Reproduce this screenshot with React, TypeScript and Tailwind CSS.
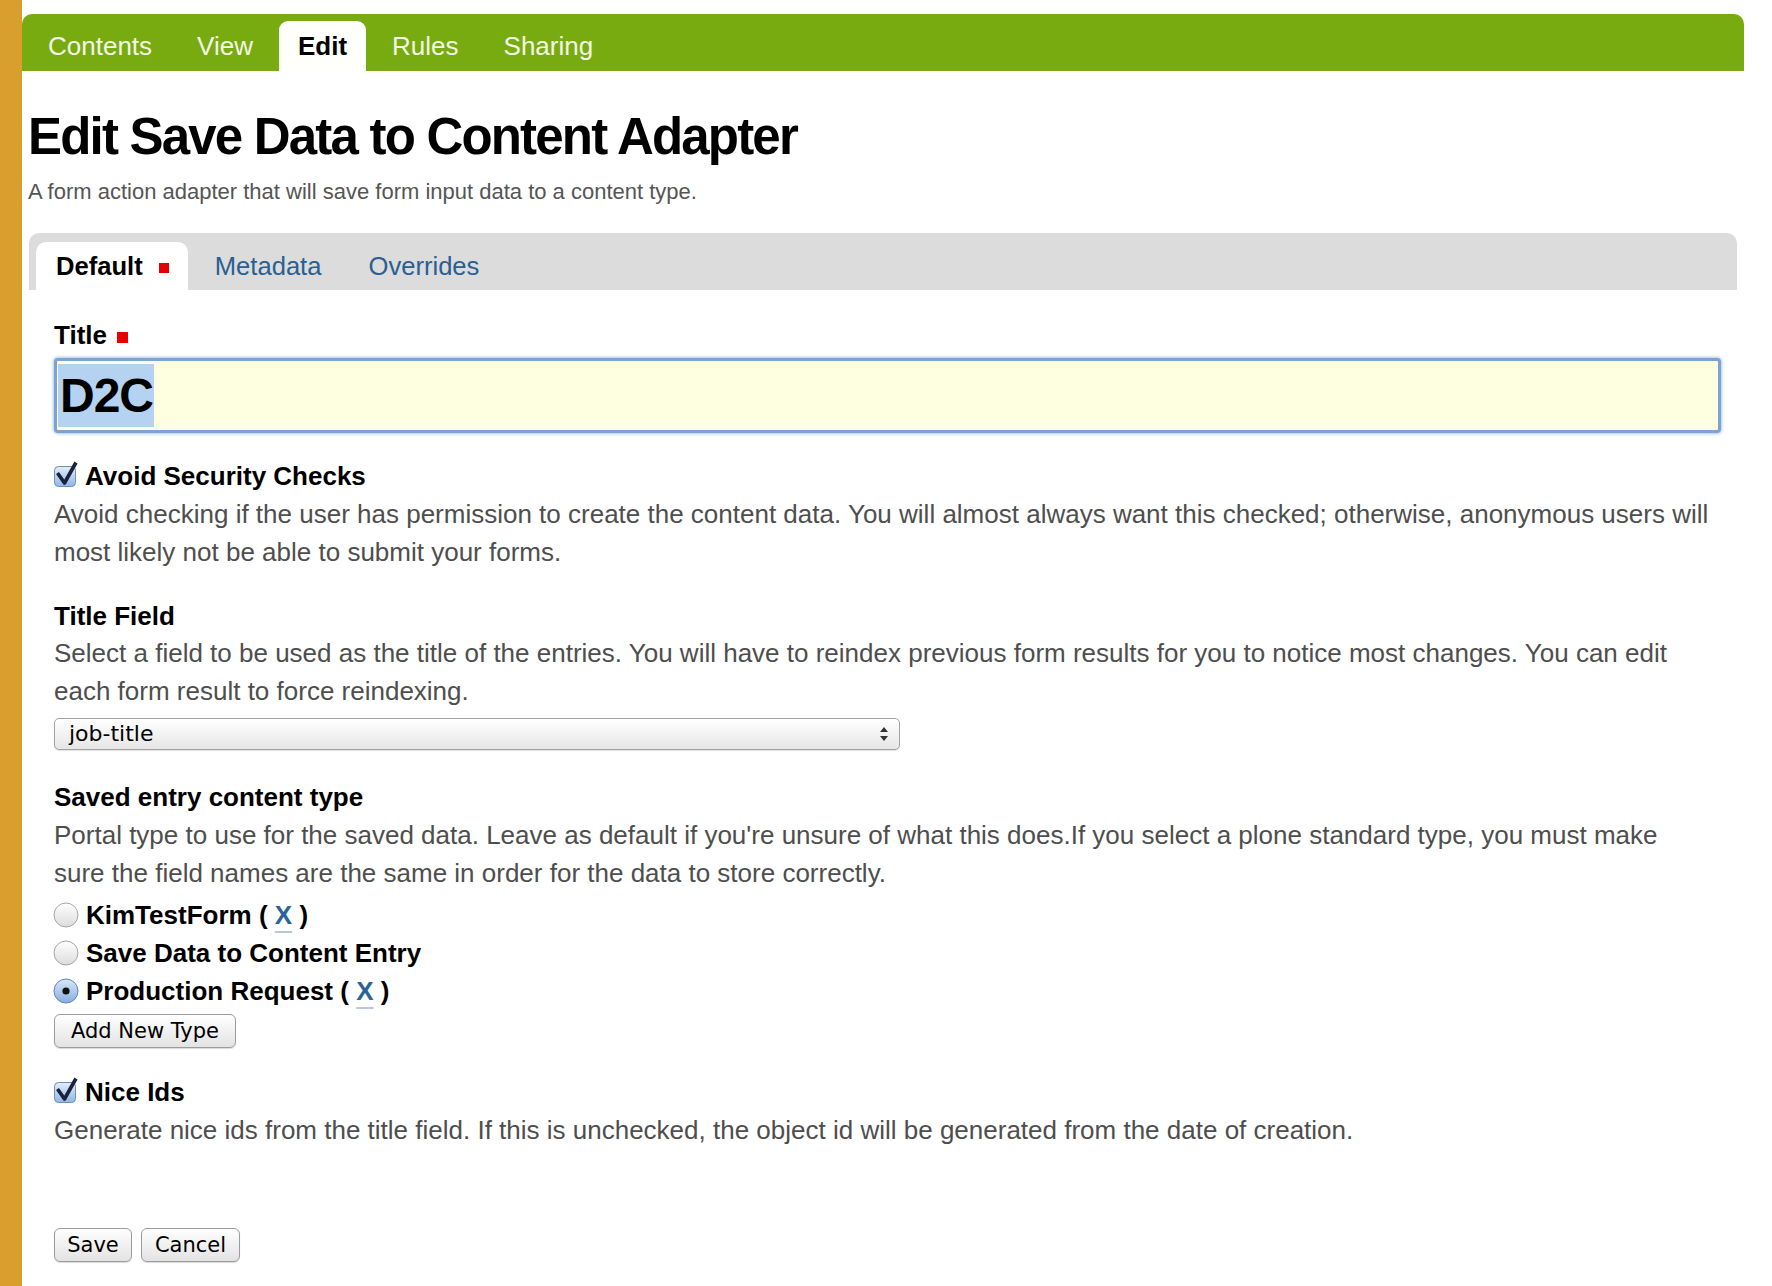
import { useState } from "react";

const navItems = ["Contents", "View", "Edit", "Rules", "Sharing"];

function Checkbox() {
  return (
    <svg width="24" height="28" viewBox="0 0 24 28" className="shrink-0">
      <defs>
        <linearGradient id="cbFill" x1="0" y1="0" x2="0" y2="1">
          <stop offset="0" stopColor="#e4eefa" />
          <stop offset="1" stopColor="#92b6e4" />
        </linearGradient>
      </defs>
      <rect x="0.5" y="6.5" width="21" height="20" rx="4" fill="url(#cbFill)" stroke="#6e8fbd" />
      <path d="M3.5 13 L10.5 23 L22 2.5" fill="none" stroke="#17233b" strokeWidth="3.6" strokeLinejoin="round" />
    </svg>
  );
}

function Radio({ checked }: { checked?: boolean }) {
  return (
    <svg width="26" height="26" viewBox="0 0 26 26" className="shrink-0">
      <defs>
        <linearGradient id="rdOff" x1="0" y1="0" x2="0" y2="1">
          <stop offset="0" stopColor="#ffffff" />
          <stop offset="1" stopColor="#dcdcdc" />
        </linearGradient>
        <linearGradient id="rdOn" x1="0" y1="0" x2="0" y2="1">
          <stop offset="0" stopColor="#d9e8f8" />
          <stop offset="1" stopColor="#86aee0" />
        </linearGradient>
      </defs>
      <circle
        cx="13"
        cy="13"
        r="12"
        fill={checked ? "url(#rdOn)" : "url(#rdOff)"}
        stroke={checked ? "#5d86bb" : "#a6a6a6"}
      />
      {checked && <circle cx="13" cy="13" r="3.6" fill="#111" />}
    </svg>
  );
}

function XLink() {
  return (
    <>
      {" "}({" "}
      <span className="text-[#2a6496] underline decoration-[#b9c8d8] decoration-2 underline-offset-[7px]">X</span>
      {" "})
    </>
  );
}

function Button({ children, className }: { children: React.ReactNode; className: string }) {
  return (
    <button
      type="button"
      className={`flex h-[34px] items-center justify-center rounded-[6px] border border-[#9c9c9c] bg-gradient-to-b from-white to-[#e3e3e3] font-['DejaVu_Sans'] text-[21px] leading-[32px] text-black shadow-[0_1px_1px_rgba(0,0,0,0.15)] ${className}`}
    >
      {children}
    </button>
  );
}

export default function App() {
  const [contentType, setContentType] = useState("Production Request");

  return (
    <div className="flex min-h-screen bg-white font-['Liberation_Sans',Arial,sans-serif] text-black">
      <div className="w-[22px] shrink-0 bg-[#d99f2e]" />

      <div className="flex-1 pr-[28px]">
        {/* top nav */}
        <nav className="mt-[14px] flex h-[57px] items-end gap-[7px] rounded-t-[10px] bg-[#78ab10] pl-[7px]">
          {navItems.map((item) =>
            item === "Edit" ? (
              <span
                key={item}
                className="h-[50px] rounded-t-[9px] bg-[#fffffb] px-[19px] text-[26px] font-bold leading-[50px] text-black"
              >
                {item}
              </span>
            ) : (
              <span key={item} className="h-[50px] px-[19px] text-[26px] leading-[50px] text-[#f3f8e6]">
                {item}
              </span>
            ),
          )}
        </nav>

        <div className="pl-[6px]">
          <h1 className="mt-[36px] text-[51px] font-bold leading-[60px] tracking-[-1.8px]">
            Edit Save Data to Content Adapter
          </h1>
          <p className="mt-[12px] text-[22px] leading-[26px] text-[#555]">
            A form action adapter that will save form input data to a content type.
          </p>

          {/* fieldset tabs */}
          <div className="ml-[1px] mr-[7px] mt-[28px] flex h-[57px] items-end gap-[7px] rounded-t-[10px] bg-[#dcdcdc] pl-[7px]">
            <span className="flex h-[48px] items-center rounded-t-[10px] bg-white pl-[20px] pr-[19px] text-[25.6px] font-bold">
              Default
              <span className="ml-[16px] mt-[4px] h-[10px] w-[10px] bg-[#e60000]" />
            </span>
            <span className="h-[48px] px-[20px] text-[25.6px] leading-[48px] text-[#2a5f91]">Metadata</span>
            <span className="h-[48px] px-[20px] text-[25.6px] leading-[48px] text-[#2a5f91]">Overrides</span>
          </div>

          <div className="pl-[26px] pr-[23px] text-[26px]">
            {/* Title */}
            <div className="mt-[30px] flex items-center font-bold leading-[30px]">
              Title
              <span className="ml-[10px] mt-[4px] h-[11px] w-[11px] bg-[#e60000]" />
            </div>
            <div className="mt-[8px] flex h-[75px] items-center rounded-[4px] border-[3px] border-[#7ba3d5] bg-[#fefee1] pl-[1px] shadow-[0_0_3px_1px_rgba(120,160,215,0.6)]">
              <span className="h-[63px] bg-[#b5d3f1] pl-[2px] pr-[1px] text-[48px] font-bold leading-[63px] tracking-[-1px]">
                D2C
              </span>
            </div>

            {/* Avoid Security Checks */}
            <div className="mt-[28px] flex items-center gap-[7px] font-bold leading-[30px]">
              <span className="-mt-[4px]">
                <Checkbox />
              </span>
              Avoid Security Checks
            </div>
            <p className="mt-[4px] max-w-[1658px] leading-[38.4px] text-[#4e4e4e]">
              Avoid checking if the user has permission to create the content data. You will almost always want this
              checked; otherwise, anonymous users will most likely not be able to submit your forms.
            </p>

            {/* Title Field */}
            <div className="mt-[29px] font-bold leading-[30px]">Title Field</div>
            <p className="mt-[3px] max-w-[1658px] leading-[38.4px] text-[#4e4e4e]">
              Select a field to be used as the title of the entries. You will have to reindex previous form results for
              you to notice most changes. You can edit each form result to force reindexing.
            </p>
            <div className="mt-[7px] flex h-[32px] w-[846px] items-center justify-between rounded-[5px] border border-[#a3a3a3] bg-gradient-to-b from-white to-[#e6e6e6] pl-[14px] pr-[11px] shadow-[0_1px_1px_rgba(0,0,0,0.12)]">
              <span className="font-['DejaVu_Sans'] text-[22px] leading-[30px]">job-title</span>
              <svg width="8" height="14" viewBox="0 0 8 14">
                <path d="M4 0 L8 5 L0 5 Z M0 9 L8 9 L4 14 Z" fill="#333" />
              </svg>
            </div>

            {/* Saved entry content type */}
            <div className="mt-[32px] font-bold leading-[30px]">Saved entry content type</div>
            <p className="mt-[4px] max-w-[1658px] leading-[38.4px] text-[#4e4e4e]">
              Portal type to use for the saved data. Leave as default if you're unsure of what this does.If you select a
              plone standard type, you must make sure the field names are the same in order for the data to store
              correctly.
            </p>
            <div className="mt-[4px] -ml-[1px]">
              {[
                { name: "KimTestForm", removable: true },
                { name: "Save Data to Content Entry", removable: false },
                { name: "Production Request", removable: true },
              ].map((t) => (
                <label
                  key={t.name}
                  className="flex h-[38px] cursor-pointer items-center gap-[7px] font-bold"
                  onClick={() => setContentType(t.name)}
                >
                  <Radio checked={contentType === t.name} />
                  <span>
                    {t.name}
                    {t.removable && <XLink />}
                  </span>
                </label>
              ))}
            </div>
            <Button className="mt-[4px] w-[182px]">Add New Type</Button>

            {/* Nice Ids */}
            <div className="mt-[29px] flex items-center gap-[7px] font-bold leading-[30px]">
              <span className="-mt-[4px]">
                <Checkbox />
              </span>
              Nice Ids
            </div>
            <p className="mt-[4px] max-w-[1658px] leading-[38.4px] text-[#4e4e4e]">
              Generate nice ids from the title field. If this is unchecked, the object id will be generated from the date
              of creation.
            </p>

            <div className="mt-[78px] flex gap-[9px] pb-[24px]">
              <Button className="w-[78px]">Save</Button>
              <Button className="w-[99px]">Cancel</Button>
            </div>
          </div>
        </div>
      </div>
    </div>
  );
}
